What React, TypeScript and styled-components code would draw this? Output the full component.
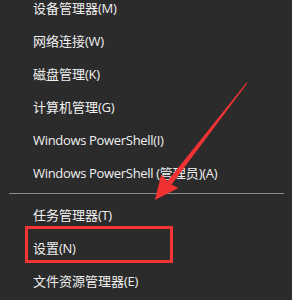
import React from 'react'
import styled, { createGlobalStyle } from 'styled-components'

const GlobalStyle = createGlobalStyle`
  html, body {
    margin: 0;
    padding: 0;
    background: #2b2b2b;
  }
  body {
    width: 292px;
    height: 300px;
    overflow: hidden;
  }
`

type MenuEntry = { label: string } | { separator: true }

const entries: MenuEntry[] = [
  { label: '设备管理器(M)' },
  { label: '网络连接(W)' },
  { label: '磁盘管理(K)' },
  { label: '计算机管理(G)' },
  { label: 'Windows PowerShell(I)' },
  { label: 'Windows PowerShell (管理员)(A)' },
  { separator: true },
  { label: '任务管理器(T)' },
  { label: '设置(N)' },
  { label: '文件资源管理器(E)' },
]

// latin runs get tighter spacing, the Segoe-ish look of the original menu
const renderLabel = (label: string) =>
  label.split(/([\x20-\x7e]+)/).map((part, i) =>
    /^[\x20-\x7e]+$/.test(part) ? <Latin key={i}>{part}</Latin> : part
  )

const App = () => {
  return (
    <>
      <GlobalStyle />
      <Screen>
        <Menu>
          {entries.map((entry, i) =>
            'separator' in entry ? (
              <Separator key={i} />
            ) : (
              <MenuItem key={i}>{renderLabel(entry.label)}</MenuItem>
            )
          )}
        </Menu>
        <Annotations />
      </Screen>
    </>
  )
}

// red arrow + highlight box drawn over the menu
const Annotations = () => {
  return (
    <Overlay width="292" height="300" viewBox="0 0 292 300">
      <polygon
        points="247.5,83 246.6,82.4 167.4,181.2 161.2,174.3 155,200 178.4,187.9 171.6,184.4"
        fill="#f03232"
      />
      <rect x="26.5" y="227.5" width="145" height="34" fill="none" stroke="#f33535" strokeWidth="3" />
    </Overlay>
  )
}

const Screen = styled.div`
  position: relative;
  width: 292px;
  height: 300px;
  overflow: hidden;
  background: #2b2b2b;
`

const Menu = styled.div`
  display: flex;
  flex-direction: column;
  margin-top: -9px;
`

const MenuItem = styled.div`
  height: 33px;
  display: flex;
  align-items: center;
  padding-left: 33px;
  color: #f0f0f0;
  font-family: 'Open Sans', 'Noto Sans CJK SC', sans-serif;
  font-size: 13px;
  white-space: pre;
`

const Latin = styled.span`
  letter-spacing: -0.32px;
`

const Separator = styled.div`
  height: 1px;
  margin: 4px 8px 4px 9px;
  background: #8a8a8a;
`

const Overlay = styled.svg`
  position: absolute;
  left: 0;
  top: 0;
  pointer-events: none;
`

export default App
